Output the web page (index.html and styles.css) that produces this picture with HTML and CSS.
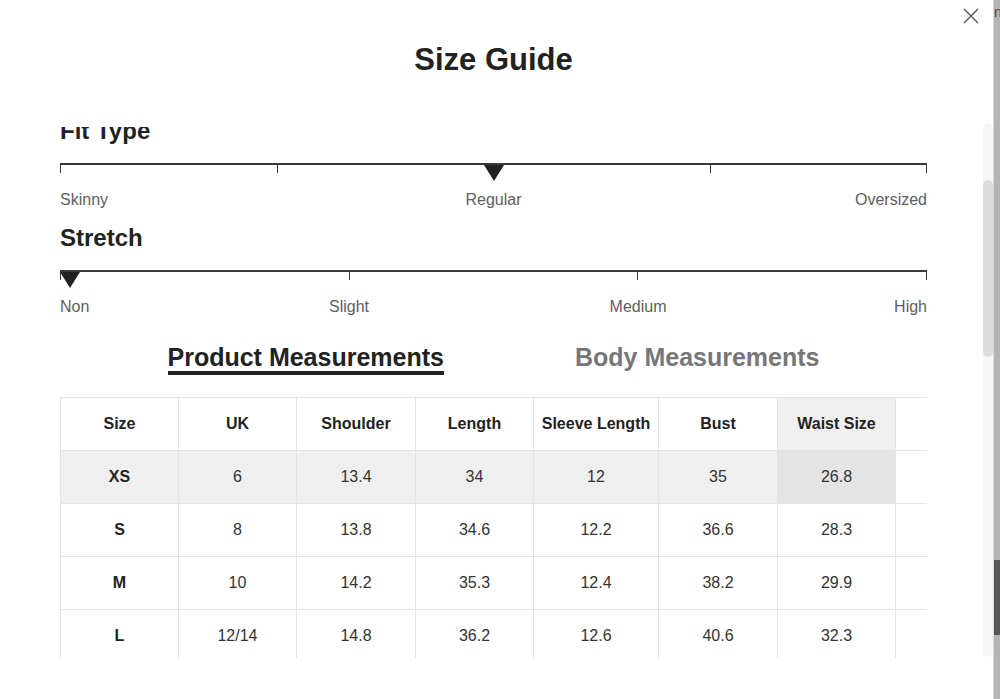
FILE: index.html
```html
<!DOCTYPE html>
<html lang="en">
<head>
<meta charset="utf-8">
<title>Size Guide</title>
<link rel="stylesheet" href="styles.css">
</head>
<body>
<div class="modal">
  <button class="close" aria-label="Close">
    <svg width="16" height="16" viewBox="0 0 16 16"><path d="M1 1 L15 15 M15 1 L1 15" stroke="#555" stroke-width="1.4" fill="none"/></svg>
  </button>
  <header class="head"><h2 class="title">Size Guide</h2></header>
  <div class="body">
    <div class="scroll">
      <section class="fit first">
        <h3 class="fit-title">Fit Type</h3>
        <div class="scale">
          <div class="segs"><span class="seg"></span><span class="seg"></span><span class="seg"></span><span class="seg"></span></div>
          <span class="marker" style="left:50%;transform:translateX(-50%)"></span>
        </div>
        <div class="labels">
          <span class="lbl start">Skinny</span><span class="lbl">Regular</span><span class="lbl end">Oversized</span>
        </div>
      </section>

      <section class="fit second">
        <h3 class="fit-title">Stretch</h3>
        <div class="scale">
          <div class="segs"><span class="seg"></span><span class="seg"></span><span class="seg"></span></div>
          <span class="marker" style="left:0%;transform:translateX(0%)"></span>
        </div>
        <div class="labels">
          <span class="lbl start">Non</span><span class="lbl">Slight</span><span class="lbl">Medium</span><span class="lbl end">High</span>
        </div>
      </section>

      <nav class="tabs">
        <span class="tab active">Product Measurements</span>
        <span class="tab">Body Measurements</span>
      </nav>

      <div class="table-wrap">
        <table class="sizes">
          <colgroup>
            <col class="c118"><col class="c118"><col class="c119"><col class="c118"><col class="c125"><col class="c119"><col class="c118"><col class="c118">
          </colgroup>
          <thead>
            <tr><th>Size</th><th>UK</th><th>Shoulder</th><th>Length</th><th>Sleeve Length</th><th>Bust</th><th class="hl-col">Waist Size</th><th></th></tr>
          </thead>
          <tbody>
            <tr class="hl-row"><td class="sz">XS</td><td>6</td><td>13.4</td><td>34</td><td>12</td><td>35</td><td class="hl-cross">26.8</td><td class="plain"></td></tr>
            <tr><td class="sz">S</td><td>8</td><td>13.8</td><td>34.6</td><td>12.2</td><td>36.6</td><td>28.3</td><td></td></tr>
            <tr><td class="sz">M</td><td>10</td><td>14.2</td><td>35.3</td><td>12.4</td><td>38.2</td><td>29.9</td><td></td></tr>
            <tr><td class="sz">L</td><td>12/14</td><td>14.8</td><td>36.2</td><td>12.6</td><td>40.6</td><td>32.3</td><td></td></tr>
          </tbody>
        </table>
      </div>
    </div>
    <div class="scrollbar"><span class="thumb"></span></div>
  </div>
</div>
<div class="backdrop-edge">
  <span class="edge-letter">n</span>
  <span class="edge-block"></span>
</div>
</body>
</html>
```

FILE: styles.css
```css
* { box-sizing: border-box; }
html, body { margin: 0; padding: 0; }
body {
  width: 1000px;
  height: 699px;
  overflow: hidden;
  display: flex;
  font-family: "Liberation Sans", Arial, sans-serif;
  background: #b4b4b4;
}
.modal {
  position: relative;
  width: 993px;
  flex: none;
  height: 699px;
  background: #fff;
  display: flex;
  flex-direction: column;
}
.close {
  position: absolute;
  top: 8px;
  right: 14px;
  width: 16px;
  height: 16px;
  padding: 0;
  border: 0;
  background: none;
  display: flex;
}
.head {
  height: 127px;
  flex: none;
  padding: 42px 66px 0 60px;
}
.title {
  margin: 0;
  text-align: center;
  font-size: 31px;
  line-height: 36px;
  font-weight: 700;
  color: #222;
}
.body {
  height: 531px;
  flex: none;
  display: flex;
}
.scroll {
  flex: 1;
  overflow: hidden;
  padding: 0 56px 0 60px;
}
.scrollbar {
  width: 10px;
  flex: none;
  margin: -3px 0 1px;
  background: #f5f6f8;
  border-radius: 5px;
  display: flex;
  flex-direction: column;
}
.thumb {
  margin-top: 56px;
  height: 177px;
  background: #dddddd;
  border-radius: 5px;
}
.fit-title {
  margin: 0;
  font-size: 24px;
  line-height: 30px;
  font-weight: 700;
  color: #222;
}
.first { margin-top: -11px; }
.second { margin-top: 13px; }
.scale {
  position: relative;
  margin-top: 17px;
}
.segs {
  display: flex;
}
.seg {
  flex: 1 1 0;
  height: 10px;
  border-top: 2px solid #3a3a3a;
  border-left: 1px solid #3a3a3a;
}
.seg:last-child { border-right: 1px solid #3a3a3a; }
.marker {
  position: absolute;
  top: 2px;
  width: 0;
  height: 0;
  border-left: 10px solid transparent;
  border-right: 10px solid transparent;
  border-top: 16px solid #222;
}
.labels {
  display: flex;
  justify-content: space-between;
  margin-top: 17px;
  font-size: 16px;
  line-height: 20px;
  color: #5e5e5e;
}
.lbl {
  width: 0;
  display: flex;
  justify-content: center;
  white-space: nowrap;
}
.lbl.start { justify-content: flex-start; }
.lbl.end { justify-content: flex-end; }
.tabs {
  display: flex;
  justify-content: center;
  gap: 131px;
  margin-top: 26px;
}
.tab {
  font-size: 25px;
  line-height: 28px;
  font-weight: 700;
  color: #777;
  border-bottom: 4px solid transparent;
}
.tab.active {
  color: #222;
  border-bottom-color: #222;
}
.table-wrap {
  margin-top: 22px;
  width: 867px;
  overflow: hidden;
}
.sizes {
  table-layout: fixed;
  width: 953px;
  border-collapse: collapse;
  font-size: 16px;
}
.c118 { width: 118px; }
.c119 { width: 119px; }
.c125 { width: 125px; }
.sizes th, .sizes td {
  height: 53px;
  padding: 0 4px;
  border: 1px solid #e4e4e4;
  text-align: center;
  vertical-align: middle;
  white-space: nowrap;
}
.sizes th {
  font-weight: 700;
  color: #222;
}
.sizes td {
  color: #333;
}
.sizes td.sz {
  font-weight: 700;
  color: #222;
}
.hl-row td { background: #efefef; }
.sizes th.hl-col { background: #efefef; }
.hl-row td.hl-cross { background: #e4e4e4; }
.hl-row td.plain { background: #fff; }
.backdrop-edge {
  flex: 1;
  height: 699px;
  display: flex;
  flex-direction: column;
  border-left: 1px solid #d8d8d8;
  overflow: hidden;
}
.edge-letter {
  font-size: 14px;
  line-height: 16px;
  margin-top: 4px;
  color: #444;
  white-space: nowrap;
}
.edge-block {
  margin-top: 540px;
  height: 75px;
  background: #575757;
}
```
